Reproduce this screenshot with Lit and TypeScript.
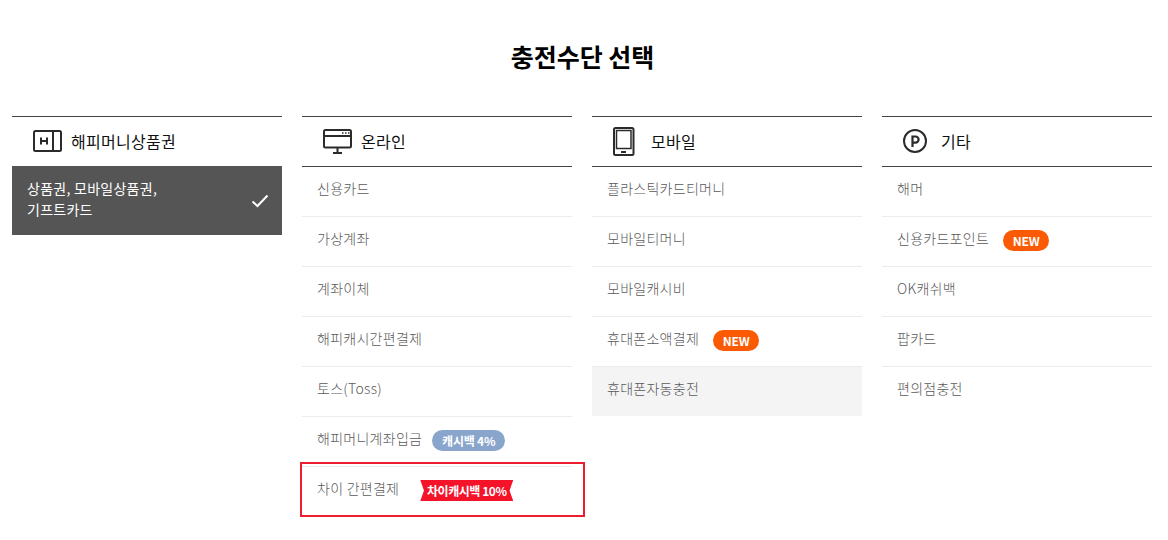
import { LitElement, html, css, svg } from "lit";
import { customElement } from "lit/decorators.js";

type Badge = { kind: "new" | "cash" | "ribbon"; text: string };
type Item = { label: string; badge?: Badge; active?: boolean; promo?: boolean };
const NEW: Badge = { kind: "new", text: "NEW" };

const icons = {
  gift: svg`<svg width="30" height="22" viewBox="0 0 30 22" fill="none" stroke="#2b2b2b" stroke-width="2"><rect x="1" y="1" width="27" height="20" rx="1.500"/><path d="M20 1v20"/><path d="M8 7.500v7M14 7.500v7M8 11h6" stroke-width="2"/></svg>`,
  online: svg`<svg width="30" height="25" viewBox="0 0 30 25" fill="none" stroke="#2b2b2b" stroke-width="2"><rect x="1" y="1" width="27" height="17.500" rx="1.500"/><path d="M1 7h27"/><path d="M19 4h1.500M22 4h1.500M25 4h1.500" stroke-width="1.500"/><path d="M14.500 18.500v5M10 24h9"/></svg>`,
  mobile: svg`<svg width="22" height="29" viewBox="0 0 22 29" fill="none" stroke="#2b2b2b"><rect x="1" y="1" width="19.500" height="27" rx="1.500" stroke-width="2"/><rect x="3.500" y="3.500" width="14.500" height="18" stroke-width="1.500"/><path d="M8 25h5" stroke-width="2"/></svg>`,
  point: svg`<svg width="24" height="24" viewBox="0 0 24 24" fill="none" stroke="#2b2b2b" stroke-width="2"><circle cx="12" cy="12" r="11"/><path d="M9.500 18V7.500h3a3 3 0 0 1 0 6.200h-3" stroke-width="2.200"/></svg>`,
};

const columns: { title: string; icon: unknown; items: Item[] }[] = [
  { title: "해피머니상품권", icon: icons.gift, items: [{ label: "상품권, 모바일상품권,\n기프트카드", active: true }] },
  {
    title: "온라인",
    icon: icons.online,
    items: [
      { label: "신용카드" },
      { label: "가상계좌" },
      { label: "계좌이체" },
      { label: "해피캐시간편결제" },
      { label: "토스(Toss)" },
      { label: "해피머니계좌입금", badge: { kind: "cash", text: "캐시백 4%" } },
      { label: "차이 간편결제", badge: { kind: "ribbon", text: "차이캐시백 10%" }, promo: true },
    ],
  },
  {
    title: "모바일",
    icon: icons.mobile,
    items: [
      { label: "플라스틱카드티머니" },
      { label: "모바일티머니" },
      { label: "모바일캐시비" },
      { label: "휴대폰소액결제", badge: NEW },
      { label: "휴대폰자동충전" },
    ],
  },
  {
    title: "기타",
    icon: icons.point,
    items: [
      { label: "해머" },
      { label: "신용카드포인트", badge: NEW },
      { label: "OK캐쉬백" },
      { label: "팝카드" },
      { label: "편의점충전" },
    ],
  },
];

@customElement("app-root")
export class AppRoot extends LitElement {
  static styles = css`
    :host {
      display: block;
      width: 1168px;
      height: 540px;
      overflow: hidden;
      background: #fff;
      font-family: "Noto Sans CJK KR", "Noto Sans", sans-serif;
      color: #5a5a5a;
    }
    h1 {
      margin: 0;
      padding: 38px 3px 0 0;
      height: 116px;
      box-sizing: border-box;
      text-align: center;
      font-size: 25px;
      line-height: 36px;
      font-weight: 700;
      color: #000;
    }
    .cols {
      display: grid;
      grid-template-columns: repeat(4, 270px);
      gap: 20px;
      padding: 0 12px;
    }
    .head {
      display: flex;
      align-items: center;
      box-sizing: border-box;
      border-top: 1px solid #444;
      border-bottom: 1px solid #444;
      height: 51px;
      padding-bottom: 1px;
      color: #111;
      font-size: 16px;
      letter-spacing: 0.3px;
    }
    .ico {
      width: 59px;
      display: flex;
      padding-left: 21px;
      box-sizing: border-box;
      flex: none;
    }
    ul {
      list-style: none;
      margin: 0;
      padding: 0;
    }
    li {
      position: relative;
      display: flex;
      align-items: flex-start;
      height: 50px;
      box-sizing: border-box;
      padding: 10px 15px 0;
      border-bottom: 1px solid #ececec;
      font-size: 14px;
      line-height: 22px;
      font-weight: 300;
      letter-spacing: 0.27px;
      white-space: pre-line;
    }
    li.last {
      border-bottom: none;
    }
    li.hover {
      background: #f4f4f4;
      border-bottom: none;
      height: 49px;
    }
    li.active {
      height: 69px;
      margin-top: -1px;
      background: #555;
      color: #fff;
      font-weight: 400;
      line-height: 21px;
      border-bottom: none;
      align-items: center;
      justify-content: space-between;
      padding: 0 13px 0 15px;
    }
    li.active .label {
      margin-top: -3px;
    }
    li.promo::after {
      content: "";
      position: absolute;
      left: -2px;
      right: -13px;
      top: -5px;
      height: 55px;
      box-sizing: border-box;
      border: 2px solid #ed1c2e;
    }
    .badge {
      display: inline-flex;
      align-items: center;
      justify-content: center;
      height: 21px;
      margin-left: 10px;
      margin-top: 3px;
      font-size: 12px;
      font-weight: 700;
      color: #fff;
      border-radius: 11px;
      line-height: 21px;
      letter-spacing: -0.2px;
    }
    .new {
      width: 46px;
      background: #fb5a05;
      margin-left: 14px;
    }
    .cash {
      width: 73px;
      background: #8aa5cc;
    }
    .ribbon {
      width: 93px;
      margin-left: 21px;
      border-radius: 0;
      background: #f5132a;
      clip-path: polygon(0 0, 100% 0, 96% 50%, 100% 100%, 0 100%, 4% 50%);
      letter-spacing: -0.45px;
    }
  `;

  private row(it: Item, i: number, n: number, col: number) {
    const hover = col === 2 && i === 4;
    const cls = [it.active ? "active" : "", it.promo ? "promo" : "", hover ? "hover" : "", i === n - 1 ? "last" : ""].join(" ");
    return html`<li class=${cls}>
      <span class="label">${it.label}</span>
      ${it.badge ? html`<span class="badge ${it.badge.kind}">${it.badge.text}</span>` : ""}
      ${it.active
        ? html`<svg width="18" height="14" viewBox="0 0 18 14" fill="none" stroke="#fff" stroke-width="2"><path d="M1.500 7.500l5 4.500 10-10.500"/></svg>`
        : ""}
    </li>`;
  }

  render() {
    return html`<h1>충전수단 선택</h1>
      <div class="cols">
        ${columns.map(
          (c, ci) => html`<section>
            <div class="head"><span class="ico">${c.icon}</span><span>${c.title}</span></div>
            <ul>${c.items.map((it, i) => this.row(it, i, c.items.length, ci))}</ul>
          </section>`
        )}
      </div>`;
  }
}
